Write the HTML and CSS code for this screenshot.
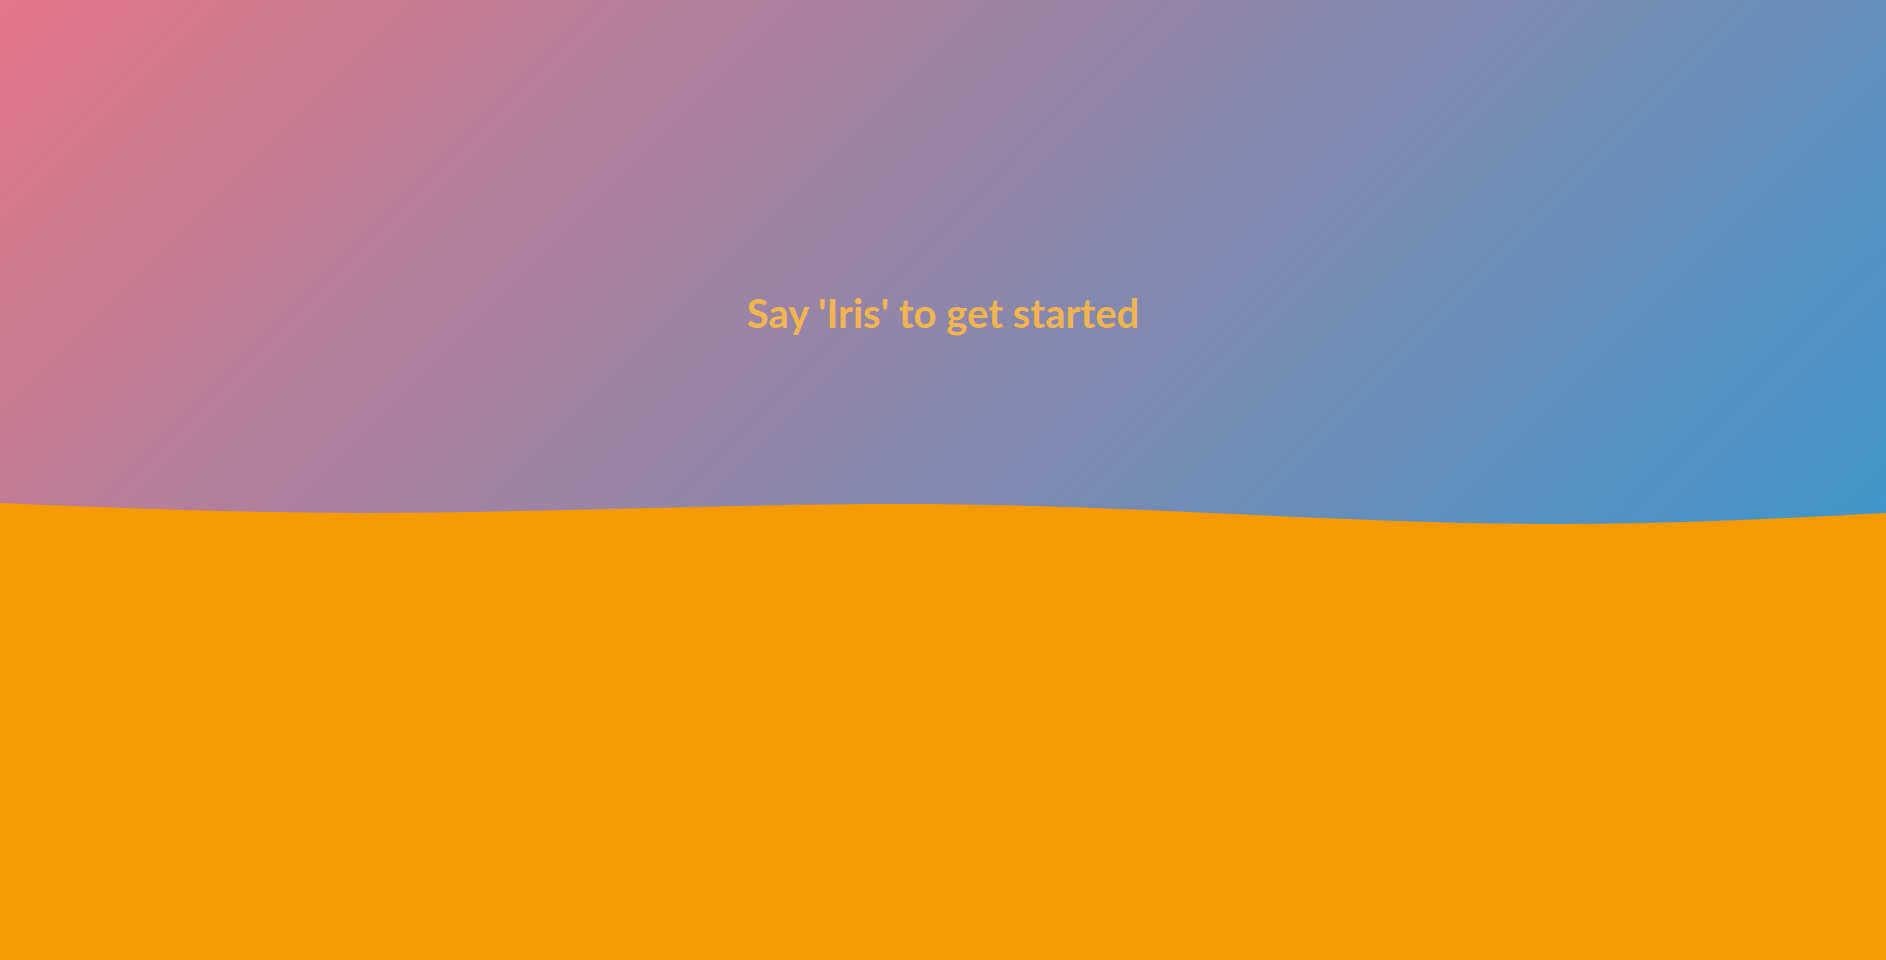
FILE: index.html
```html
<!DOCTYPE html>
<html lang="en">
<head>
<meta charset="utf-8">
<title>Iris</title>
<link rel="stylesheet" href="styles.css">
</head>
<body>
<main class="page">
  <section class="sky">
    <div class="hero">
      <h1 class="prompt">Say 'Iris' to get started</h1>
    </div>
    <svg class="wave" viewBox="0 0 1886 24" preserveAspectRatio="none" aria-hidden="true">
      <path d="M0,1 C120,6 240,11 361,11 C540,11 720,2 902,2 C1130,2 1340,22 1560,22 C1680,22 1790,16 1886,11 L1886,24 L0,24 Z" fill="#f69a03"/>
    </svg>
  </section>
  <section class="ground"></section>
</main>
</body>
</html>
```

FILE: styles.css
```css
* { box-sizing: border-box; }
html, body { margin: 0; padding: 0; }
body {
  width: 1886px;
  height: 960px;
  overflow: hidden;
  font-family: Lato, "Open Sans", sans-serif;
}
.page {
  display: flex;
  flex-direction: column;
  height: 960px;
}
.sky {
  display: flex;
  flex-direction: column;
  background: linear-gradient(135deg, #e37586 0%, #3f96cb 100%);
}
.hero {
  height: 502px;
  padding-top: 289px;
  display: flex;
  justify-content: center;
}
.prompt {
  margin: 0;
  font-size: 40px;
  line-height: 48px;
  font-weight: 700;
  color: #f3b551;
}
.wave {
  display: block;
  width: 100%;
  height: 24px;
}
.ground {
  flex: 1;
  background: #f69a03;
}
```
